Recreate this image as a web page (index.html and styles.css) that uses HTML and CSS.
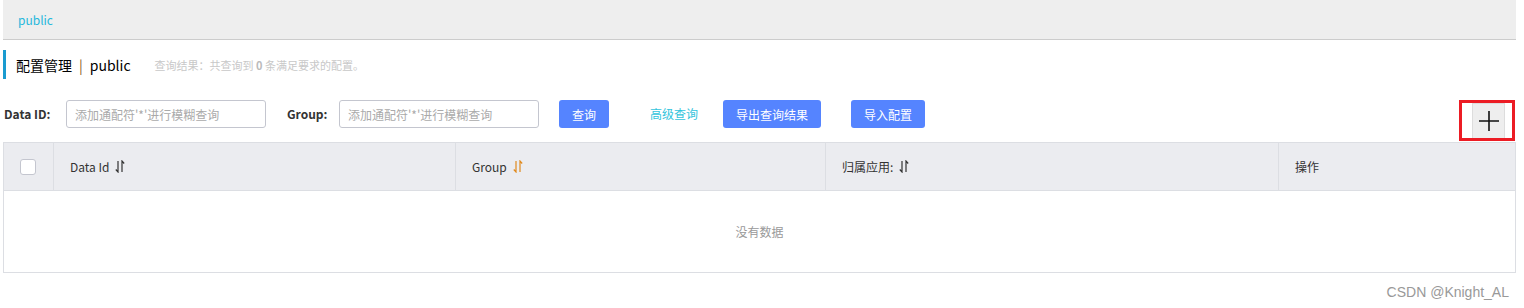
FILE: index.html
```html
<!DOCTYPE html>
<html lang="zh-CN">
<head>
<meta charset="UTF-8">
<title>配置管理</title>
<link rel="stylesheet" href="styles.css">
</head>
<body>

<div class="page">
  <div class="ns-bar">
    <a class="ns-link">public</a>
  </div>

  <div class="page-title">
    <span class="title-main">配置管理</span>
    <span class="title-sep">|</span>
    <span class="title-ns">public</span>
    <span class="title-desc">查询结果：共查询到 <b>0</b> 条满足要求的配置。</span>
  </div>

  <div class="search-row">
    <label class="field-label id-label">Data ID:</label>
    <input class="field-input" placeholder="添加通配符'*'进行模糊查询">
    <label class="field-label group-label">Group:</label>
    <input class="field-input" placeholder="添加通配符'*'进行模糊查询">
    <button class="btn btn-query">查询</button>
    <a class="adv-link">高级查询</a>
    <button class="btn btn-export">导出查询结果</button>
    <button class="btn btn-import">导入配置</button>
    <div class="add-box">
      <button class="add-btn">
        <svg width="22" height="22" viewBox="0 0 22 22"><path d="M11 1v20M1 11h20" stroke="#111" stroke-width="1.6" fill="none"/></svg>
      </button>
    </div>
  </div>

  <div class="table">
    <div class="table-head">
      <div class="th th-check"><span class="checkbox"></span></div>
      <div class="th th-id">Data Id
        <svg class="sort" width="10" height="13" viewBox="0 0 10 13"><path d="M3 1v11L0.8 9.5M7 12V1l2.2 2.5" stroke="#333" stroke-width="1.2" fill="none"/></svg>
      </div>
      <div class="th th-group">Group
        <svg class="sort" width="10" height="13" viewBox="0 0 10 13"><path d="M3 1v11L0.8 9.5M7 12V1l2.2 2.5" stroke="#e08a1e" stroke-width="1.2" fill="none"/></svg>
      </div>
      <div class="th th-app">归属应用:
        <svg class="sort" width="10" height="13" viewBox="0 0 10 13"><path d="M3 1v11L0.8 9.5M7 12V1l2.2 2.5" stroke="#333" stroke-width="1.2" fill="none"/></svg>
      </div>
      <div class="th th-op">操作</div>
    </div>
    <div class="table-empty">没有数据</div>
  </div>

  <div class="watermark">CSDN @Knight_AL</div>
</div>

</body>
</html>
```

FILE: styles.css
```css
* {
  box-sizing: border-box;
}
body {
  margin: 0;
  font-family: "Noto Sans CJK SC", "Noto Sans", sans-serif;
  font-size: 12px;
  color: #333;
  background: #fff;
}
.page {
  width: 1516px;
  padding-left: 3px;
}
.ns-bar {
  height: 40px;
  background: #eee;
  border-bottom: 1px solid #ccc;
  padding-left: 15px;
  line-height: 40px;
}
.ns-link {
  color: #26b8dc;
  font-size: 12px;
}
.page-title {
  margin-top: 10px;
  height: 29px;
  border-left: 3px solid #1a9bd0;
  padding-left: 10px;
  display: flex;
  align-items: center;
}
.title-main {
  font-size: 14px;
  color: #000;
}
.title-sep {
  color: #8a5a1a;
  font-size: 14px;
  margin: 0 7px;
}
.title-ns {
  font-size: 14px;
  color: #000;
}
.title-desc {
  margin-left: 24px;
  font-size: 11px;
  color: #c8c8c8;
}
.title-desc b {
  color: #bbb;
}
.search-row {
  margin-top: 21px;
  display: flex;
  align-items: flex-start;
}
.field-label {
  font-weight: bold;
  font-size: 12px;
  color: #333;
  line-height: 28px;
  padding-left: 1px;
}
.id-label {
  width: 51px;
}
.group-label {
  width: 41px;
  margin-left: 20px;
}
.field-input {
  width: 200px;
  height: 28px;
  margin-left: 12px;
  border: 1px solid #c4c6cf;
  border-radius: 3px;
  padding: 0 8px;
  font-family: inherit;
  font-size: 12px;
  outline: none;
}
.field-input::placeholder {
  color: #aaa;
}
.btn {
  height: 28px;
  border: none;
  border-radius: 3px;
  background: #5584ff;
  color: #fff;
  font-family: inherit;
  font-size: 12px;
  padding: 0;
}
.btn-query {
  width: 50px;
  margin-left: 20px;
}
.adv-link {
  margin-left: 41px;
  color: #33c4dc;
  line-height: 28px;
}
.btn-export {
  width: 98px;
  margin-left: 25px;
}
.btn-import {
  width: 74px;
  margin-left: 30px;
}
.add-box {
  margin-left: auto;
  margin-right: 1px;
  border: 3px solid #ec1c24;
  padding: 0 7px 0 10px;
  height: 41px;
}
.add-btn {
  width: 33px;
  height: 35px;
  background: #eee;
  border: 1px solid #ddd;
  border-bottom: none;
  padding: 0;
  display: flex;
  align-items: center;
  justify-content: center;
}
.table {
  margin-top: 1px;
  border: 1px solid #dcdee3;
}
.table-head {
  display: flex;
  height: 48px;
  background: #ebecf0;
  border-bottom: 1px solid #dcdee3;
}
.th {
  display: flex;
  align-items: center;
  padding-left: 16px;
  border-left: 1px solid #dcdee3;
  font-size: 12px;
  color: #333;
}
.th-check {
  width: 49px;
  border-left: none;
}
.th-id {
  width: 402px;
}
.th-group {
  width: 370px;
}
.th-app {
  width: 453px;
}
.th-op {
  flex: 1;
}
.checkbox {
  width: 16px;
  height: 16px;
  background: #fff;
  border: 1px solid #c4c6cf;
  border-radius: 3px;
}
.sort {
  margin-left: 6px;
}
.table-empty {
  height: 81px;
  display: flex;
  align-items: center;
  justify-content: center;
  color: #999;
  font-size: 12px;
}
.watermark {
  margin-top: 11px;
  text-align: right;
  padding-right: 7px;
  font-family: "Liberation Sans", Arial, sans-serif;
  font-size: 14px;
  color: #999;
}
```
